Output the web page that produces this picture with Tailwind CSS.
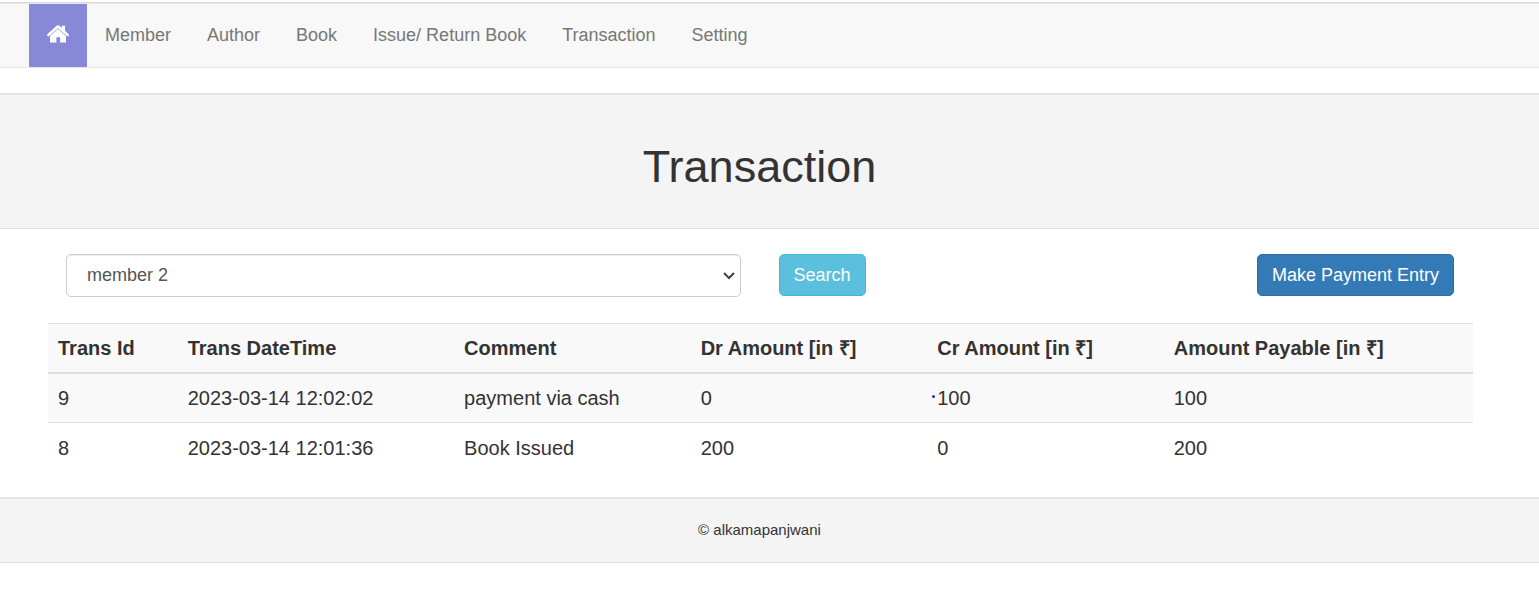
<!DOCTYPE html>
<html lang="en">
<head>
<meta charset="utf-8">
<title>Transaction</title>
<script src="https://cdn.jsdelivr.net/npm/@tailwindcss/browser@4"></script>
</head>
<body class="bg-white pt-[2px] font-['Liberation_Sans',Arial,sans-serif] text-[18px] text-[#333333]">
<header class="border-t border-[#dadada]">
  <nav class="border-y border-[#e7e7e7] bg-[#f8f8f8] pl-[29px]">
    <ul class="flex h-[63px] items-stretch text-[#777777]">
      <li class="flex"><a href="#" aria-label="Home" class="flex w-[58px] items-center justify-center bg-[#8888d8] pb-[3px]">
        <svg class="h-[18px] w-[22px]" viewBox="0 0 22 18" fill="#fff" aria-hidden="true">
          <path d="M9.8 0.6H12.2L14.8 2.9V0.8H18V5.8L21.9 9.4V10.8L20.4 11.4 11 3.3 1.6 11.4 0.1 10.8V9.4Z"/>
          <path d="M11 4.1 19 11V17.4H13.1V12.2H9.4V17.4H3V11Z"/>
        </svg></a></li>
      <li class="flex"><a href="#" class="flex items-center px-[18px]">Member</a></li>
      <li class="flex"><a href="#" class="flex items-center px-[18px]">Author</a></li>
      <li class="flex"><a href="#" class="flex items-center px-[18px]">Book</a></li>
      <li class="flex"><a href="#" class="flex items-center px-[18px]">Issue/ Return Book</a></li>
      <li class="flex"><a href="#" class="flex items-center px-[18px]">Transaction</a></li>
      <li class="flex"><a href="#" class="flex items-center px-[18px]">Setting</a></li>
    </ul>
  </nav>
</header>
<main>
  <div class="mt-[25px] border-y border-[#e0e0e0] bg-[#f4f4f4] pt-[48px] pr-[20px] pb-[36px] text-center inset-shadow-[0_1px_1px_rgba(0,0,0,0.05)]">
    <h1 class="text-[45px] leading-[50px]">Transaction</h1>
  </div>
  <div class="mr-[66px] ml-[48px] pt-[25px]">
    <form class="grid grid-cols-2 items-start">
      <div class="relative pr-[20px] pl-[18px]">
        <select aria-label="Member" class="h-[43px] w-full appearance-none rounded-[5px] border border-[#cccccc] bg-white px-[20px] text-[#555555] inset-shadow-[0_1px_1px_rgba(0,0,0,0.075)]">
          <option>member 2</option>
        </select>
        <svg class="pointer-events-none absolute top-[18px] right-[26px] h-[8px] w-[12px]" viewBox="0 0 12 8" fill="none" stroke="#444" stroke-width="2" aria-hidden="true"><path d="M1 1 6 6 11 1"/></svg>
      </div>
      <div class="flex justify-between pr-[19px] pl-[18px]">
        <button type="button" class="h-[42px] rounded-[5px] border border-[#46b8da] bg-[#5bc0de] px-[14px] text-white">Search</button>
        <button type="button" class="h-[42px] rounded-[5px] border border-[#2e6da4] bg-[#337ab7] px-[14px] text-white">Make Payment Entry</button>
      </div>
    </form>
    <table class="mt-[26px] w-full table-fixed border-collapse text-left text-[20px] leading-[28px]">
      <colgroup>
        <col class="w-[9.1%]"><col class="w-[19.4%]"><col class="w-[16.6%]"><col class="w-[16.6%]"><col class="w-[16.6%]"><col>
      </colgroup>
      <thead>
        <tr class="h-[49px] border-t border-b-2 border-[#dddddd] bg-[#f9f9f9]">
          <th class="px-[10px]">Trans Id</th>
          <th class="px-[10px]">Trans DateTime</th>
          <th class="px-[10px]">Comment</th>
          <th class="px-[10px]">Dr Amount [in ₹]</th>
          <th class="px-[10px]">Cr Amount [in ₹]</th>
          <th class="px-[10px]">Amount Payable [in ₹]</th>
        </tr>
      </thead>
      <tbody>
        <tr class="h-[50px] border-b border-[#dddddd] bg-[#f9f9f9]">
          <td class="px-[10px]">9</td>
          <td class="px-[10px]">2023-03-14 12:02:02</td>
          <td class="px-[10px]">payment via cash</td>
          <td class="px-[10px]">0</td>
          <td class="relative px-[10px]"><span class="absolute top-[21px] left-[5px] size-[3px] rounded-full bg-[#2222dd]"></span>100</td>
          <td class="px-[10px]">100</td>
        </tr>
        <tr class="h-[50px]">
          <td class="px-[10px]">8</td>
          <td class="px-[10px]">2023-03-14 12:01:36</td>
          <td class="px-[10px]">Book Issued</td>
          <td class="px-[10px]">200</td>
          <td class="px-[10px]">0</td>
          <td class="px-[10px]">200</td>
        </tr>
      </tbody>
    </table>
  </div>
</main>
<footer class="mt-[24px] border-y border-[#e0e0e0] bg-[#f4f4f4] py-[21px] pr-[20px] text-center text-[15px] leading-[22px] inset-shadow-[0_1px_1px_rgba(0,0,0,0.05)]">
  <p>© alkamapanjwani</p>
</footer>
</body>
</html>
